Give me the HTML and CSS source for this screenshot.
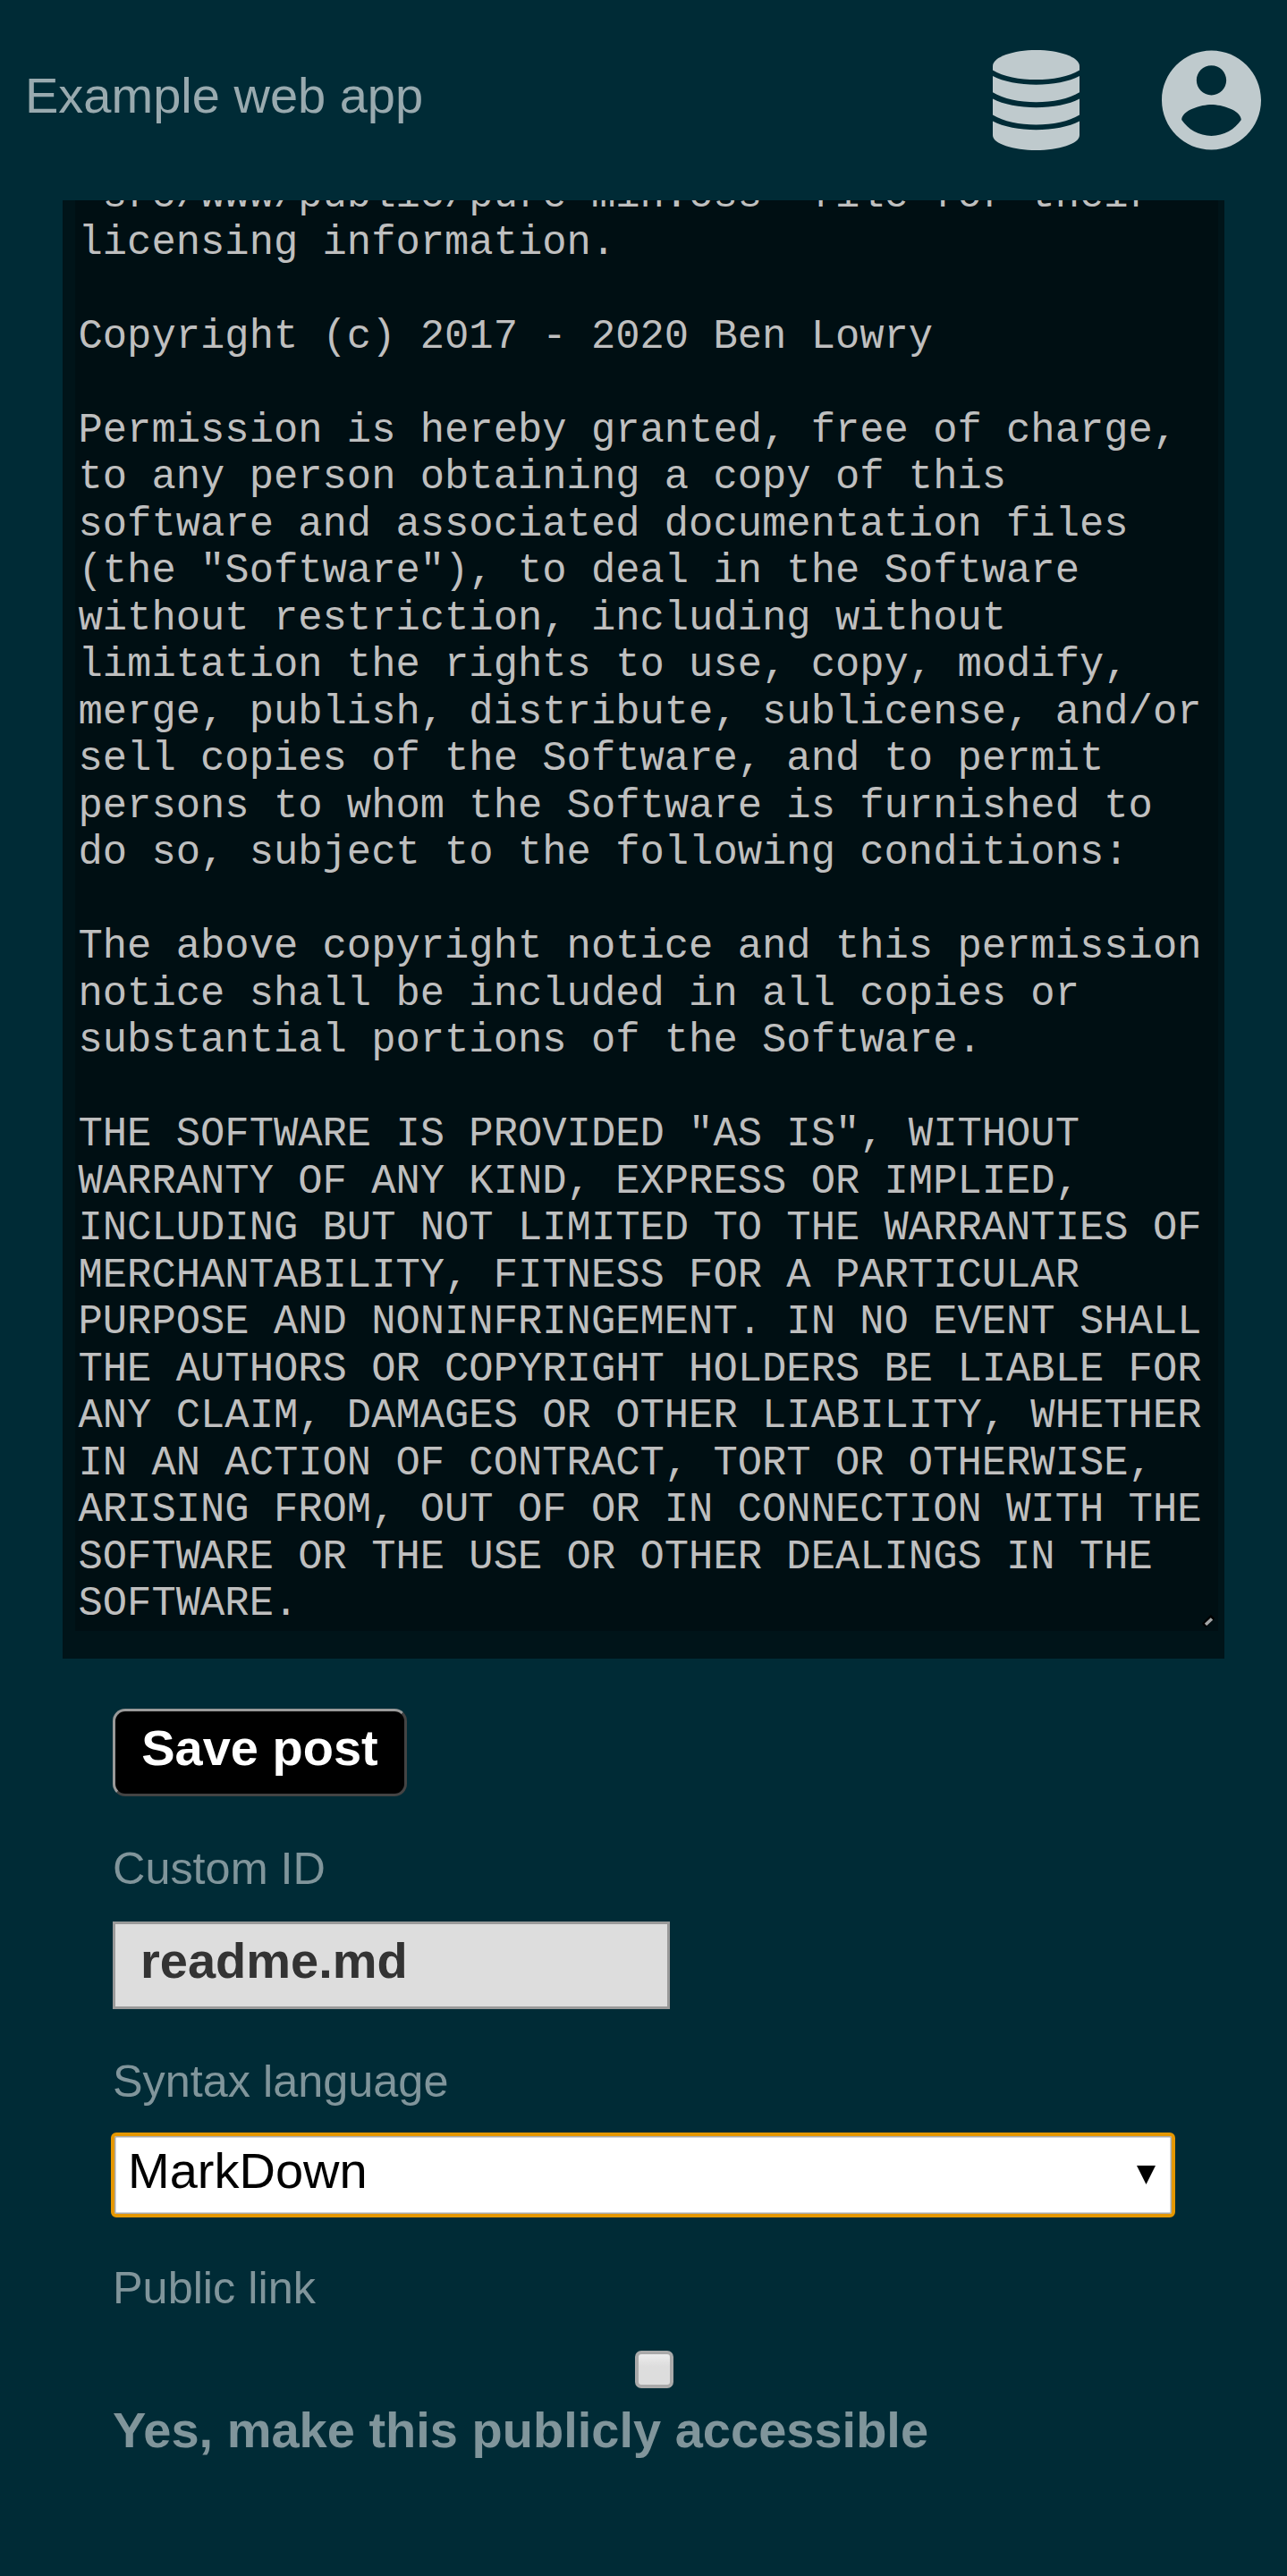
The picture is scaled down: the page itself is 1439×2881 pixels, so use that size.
FILE: index.html
```html
<!DOCTYPE html>
<html lang="en">
<head>
<meta charset="utf-8">
<title>Example web app</title>
<link rel="stylesheet" href="styles.css">
</head>
<body>
<header class="bar">
  <h1 class="bar-title">Example web app</h1>
  <nav class="bar-icons">
    <svg class="icon-db" viewBox="90 78 290 335" preserveAspectRatio="none" aria-hidden="true">
      <path d="M90 145V132C90 100 160 78 235 78S380 100 380 132V145C345 166 290 177 235 177S125 166 90 145Z"/>
      <path d="M90 165C125 184 180 194 235 194S345 184 380 165V219C345 241 290 252 235 252S125 241 90 219Z"/>
      <path d="M90 241C125 260 180 270 235 270S345 260 380 241V295C345 317 290 328 235 328S125 317 90 295Z"/>
      <path d="M90 316C125 335 180 345 235 345S345 335 380 316V363C380 392 310 413 235 413S90 392 90 363Z"/>
    </svg>
    <svg class="icon-user" viewBox="2 2 20 20" aria-hidden="true">
      <path d="M12 2C6.48 2 2 6.48 2 12s4.48 10 10 10 10-4.48 10-10S17.52 2 12 2zm0 3c1.66 0 3 1.34 3 3s-1.34 3-3 3-3-1.34-3-3 1.34-3 3-3zm0 14.2c-2.5 0-4.71-1.28-6-3.22.03-1.99 4-3.08 6-3.08 1.99 0 5.97 1.09 6 3.08-1.29 1.94-3.5 3.22-6 3.22z"/>
    </svg>
  </nav>
</header>
<main>
  <section class="editor">
    <div class="editor-area">
<pre class="editor-text">`src/www/public/pure-min.css` file for their
licensing information.

Copyright (c) 2017 - 2020 Ben Lowry

Permission is hereby granted, free of charge,
to any person obtaining a copy of this
software and associated documentation files
(the "Software"), to deal in the Software
without restriction, including without
limitation the rights to use, copy, modify,
merge, publish, distribute, sublicense, and/or
sell copies of the Software, and to permit
persons to whom the Software is furnished to
do so, subject to the following conditions:

The above copyright notice and this permission
notice shall be included in all copies or
substantial portions of the Software.

THE SOFTWARE IS PROVIDED "AS IS", WITHOUT
WARRANTY OF ANY KIND, EXPRESS OR IMPLIED,
INCLUDING BUT NOT LIMITED TO THE WARRANTIES OF
MERCHANTABILITY, FITNESS FOR A PARTICULAR
PURPOSE AND NONINFRINGEMENT. IN NO EVENT SHALL
THE AUTHORS OR COPYRIGHT HOLDERS BE LIABLE FOR
ANY CLAIM, DAMAGES OR OTHER LIABILITY, WHETHER
IN AN ACTION OF CONTRACT, TORT OR OTHERWISE,
ARISING FROM, OUT OF OR IN CONNECTION WITH THE
SOFTWARE OR THE USE OR OTHER DEALINGS IN THE
SOFTWARE.</pre>
      <svg class="grip" viewBox="0 0 14 14" aria-hidden="true">
        <path class="grip-edge" d="M2 12L12 2"/>
        <path class="grip-line" d="M4 11L11 4.500"/>
      </svg>
    </div>
  </section>
  <form class="fields">
    <button class="save" type="button">Save post</button>
    <label class="label label-id" for="id">Custom ID</label>
    <input class="text-input" id="id" type="text" value="readme.md">
    <div class="label label-lang">Syntax language</div>
    <div class="select" role="combobox">
      <span>MarkDown</span>
      <svg class="arrow" viewBox="0 0 20 20" aria-hidden="true"><path d="M0 0H20L10 20Z"/></svg>
    </div>
    <div class="label label-link">Public link</div>
    <div class="check" role="checkbox" aria-checked="false"></div>
    <div class="check-text">Yes, make this publicly accessible</div>
  </form>
</main>
</body>
</html>
```

FILE: styles.css
```css
* {
  box-sizing: border-box;
}

body {
  margin: 0;
  min-height: 2881px;
  background: #002b36;
  font-family: "Liberation Sans", Arial, sans-serif;
  font-size: 56px;
}

.bar {
  display: flex;
  justify-content: space-between;
  align-items: flex-start;
  height: 224px;
  padding: 56px 29px 0 28px;
}

.bar-title {
  margin: 19px 0 0;
  font-size: 56px;
  font-weight: 400;
  line-height: 64px;
  color: #99aaaf;
}

.bar-icons {
  display: flex;
  gap: 92px;
  fill: #bfcacd;
}

.icon-db {
  width: 97px;
  height: 112px;
}

.icon-user {
  width: 111px;
  height: 112px;
}

.editor {
  height: 1631px;
  margin: 0 70px;
  padding: 0 7px 31px 14px;
  background: #001419;
}

.editor-area {
  position: relative;
  display: flex;
  flex-direction: column;
  justify-content: flex-end;
  height: 1600px;
  padding: 0 0 3.5px 3.5px;
  overflow: hidden;
  background: #000f13;
}

.editor-text {
  flex: none;
  margin: 0;
  font-family: "Liberation Mono", "Courier New", monospace;
  font-size: 45.5px;
  line-height: 52.5px;
  color: #bfbfbf;
}

.grip {
  position: absolute;
  right: 4px;
  bottom: 4px;
  width: 14px;
  height: 14px;
  fill: none;
}

.grip-edge {
  stroke: #000;
  stroke-width: 6;
}

.grip-line {
  stroke: #a3a6a7;
  stroke-width: 3.5;
}

.fields {
  display: flex;
  flex-direction: column;
  align-items: flex-start;
  padding: 56px 126px 0;
}

.save {
  width: 329px;
  height: 98px;
  padding: 0 0 11px;
  border: 3.5px solid;
  border-color: #999 #444 #444 #999;
  border-radius: 14px;
  background: #000;
  color: #fff;
  font: 700 56px/64px "Liberation Sans", Arial, sans-serif;
}

.label {
  font-size: 50.4px;
  line-height: 56px;
  color: #80959b;
}

.label-id {
  margin-top: 53px;
}

.text-input {
  width: 623px;
  height: 98px;
  margin-top: 31px;
  padding: 0 28px 11px;
  border: 3.5px solid #999;
  border-radius: 0;
  outline: none;
  background: #ddd;
  color: #333;
  font: 700 56px/64px "Liberation Sans", Arial, sans-serif;
}

.label-lang {
  margin-top: 53px;
}

.select {
  display: flex;
  justify-content: space-between;
  align-items: center;
  width: 1190px;
  height: 95px;
  margin: 29px 0 0 -2px;
  padding: 0 18px 10px 15px;
  border: 4px solid #e59700;
  border-radius: 6px;
  box-shadow: inset 0 0 0 1.5px #aaa;
  background: #fff;
  color: #000;
  line-height: 64px;
}

.arrow {
  width: 21px;
  height: 21px;
  margin-top: 9px;
}

.label-link {
  margin-top: 51px;
}

.check {
  width: 43px;
  height: 42px;
  margin: 42px 0 0 584px;
  border: 4px solid #aaa;
  border-radius: 7px;
  background: linear-gradient(#ededed, #ddd 40%);
}

.check-text {
  margin-top: 15px;
  font-weight: 700;
  line-height: 64px;
  color: #80959b;
}
```
